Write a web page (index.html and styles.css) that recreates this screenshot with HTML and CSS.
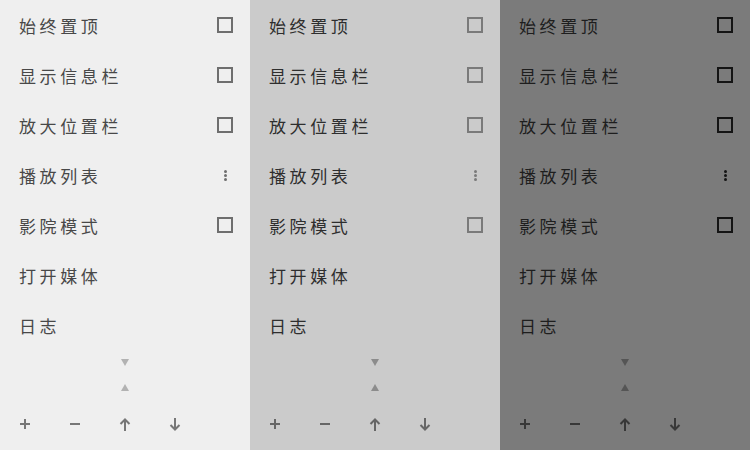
FILE: index.html
```html
<!DOCTYPE html>
<html lang="zh">
<head>
<meta charset="utf-8">
<title>Menu</title>
<link rel="stylesheet" href="styles.css">
</head>
<body>
<div class="screens">
  <section class="panel light">
    <ul class="menu">
      <li class="item"><span class="label">始终置顶</span><span class="check"></span></li>
      <li class="item"><span class="label">显示信息栏</span><span class="check"></span></li>
      <li class="item"><span class="label">放大位置栏</span><span class="check"></span></li>
      <li class="item"><span class="label">播放列表</span><span class="more"><i></i><i></i><i></i></span></li>
      <li class="item"><span class="label">影院模式</span><span class="check"></span></li>
      <li class="item"><span class="label">打开媒体</span></li>
      <li class="item"><span class="label">日志</span></li>
    </ul>
    <div class="scroller"><span class="tri down"></span><span class="tri up"></span></div>
    <div class="toolbar">
      <span class="btn"><svg width="12" height="12" viewBox="0 0 12 12"><path d="M6 1v10M1 6h10"/></svg></span>
      <span class="btn"><svg width="12" height="12" viewBox="0 0 12 12"><path d="M1 6h10"/></svg></span>
      <span class="btn"><svg width="12" height="13" viewBox="0 0 12 13"><path d="M6 1.5V13M1.5 6L6 1.5 10.5 6"/></svg></span>
      <span class="btn"><svg width="12" height="13" viewBox="0 0 12 13"><path d="M6 0V11.5M1.5 7L6 11.5 10.5 7"/></svg></span>
    </div>
  </section>
  <section class="panel mid">
    <ul class="menu">
      <li class="item"><span class="label">始终置顶</span><span class="check"></span></li>
      <li class="item"><span class="label">显示信息栏</span><span class="check"></span></li>
      <li class="item"><span class="label">放大位置栏</span><span class="check"></span></li>
      <li class="item"><span class="label">播放列表</span><span class="more"><i></i><i></i><i></i></span></li>
      <li class="item"><span class="label">影院模式</span><span class="check"></span></li>
      <li class="item"><span class="label">打开媒体</span></li>
      <li class="item"><span class="label">日志</span></li>
    </ul>
    <div class="scroller"><span class="tri down"></span><span class="tri up"></span></div>
    <div class="toolbar">
      <span class="btn"><svg width="12" height="12" viewBox="0 0 12 12"><path d="M6 1v10M1 6h10"/></svg></span>
      <span class="btn"><svg width="12" height="12" viewBox="0 0 12 12"><path d="M1 6h10"/></svg></span>
      <span class="btn"><svg width="12" height="13" viewBox="0 0 12 13"><path d="M6 1.5V13M1.5 6L6 1.5 10.5 6"/></svg></span>
      <span class="btn"><svg width="12" height="13" viewBox="0 0 12 13"><path d="M6 0V11.5M1.5 7L6 11.5 10.5 7"/></svg></span>
    </div>
  </section>
  <section class="panel dark">
    <ul class="menu">
      <li class="item"><span class="label">始终置顶</span><span class="check"></span></li>
      <li class="item"><span class="label">显示信息栏</span><span class="check"></span></li>
      <li class="item"><span class="label">放大位置栏</span><span class="check"></span></li>
      <li class="item"><span class="label">播放列表</span><span class="more"><i></i><i></i><i></i></span></li>
      <li class="item"><span class="label">影院模式</span><span class="check"></span></li>
      <li class="item"><span class="label">打开媒体</span></li>
      <li class="item"><span class="label">日志</span></li>
    </ul>
    <div class="scroller"><span class="tri down"></span><span class="tri up"></span></div>
    <div class="toolbar">
      <span class="btn"><svg width="12" height="12" viewBox="0 0 12 12"><path d="M6 1v10M1 6h10"/></svg></span>
      <span class="btn"><svg width="12" height="12" viewBox="0 0 12 12"><path d="M1 6h10"/></svg></span>
      <span class="btn"><svg width="12" height="13" viewBox="0 0 12 13"><path d="M6 1.5V13M1.5 6L6 1.5 10.5 6"/></svg></span>
      <span class="btn"><svg width="12" height="13" viewBox="0 0 12 13"><path d="M6 0V11.5M1.5 7L6 11.5 10.5 7"/></svg></span>
    </div>
  </section>
</div>
</body>
</html>
```
FILE: styles.css
```css
* { box-sizing: border-box; }
html, body { margin: 0; padding: 0; }
body {
  width: 750px;
  height: 450px;
  overflow: hidden;
  font-family: "Noto Sans CJK SC", "Noto Sans", sans-serif;
}
.screens { display: flex; height: 450px; }
.panel {
  width: 250px;
  height: 450px;
  display: flex;
  flex-direction: column;
  --bg: #efefef;
  --text: #484848;
  --check: #6e6e6e;
  --icon: #777777;
  --tri: #b2b2b2;
  background: var(--bg);
  color: var(--text);
}
.panel.mid {
  --bg: #cbcbcb;
  --text: #2e2e2e;
  --check: #7a7a7a;
  --icon: #666666;
  --tri: #8c8c8c;
}
.panel.dark {
  --bg: #7b7b7b;
  --text: #1e1e1e;
  --check: #141414;
  --icon: #383838;
  --tri: #555555;
}
.menu {
  list-style: none;
  margin: 0;
  padding: 1px 0 0 0;
}
.item {
  height: 50px;
  display: flex;
  align-items: center;
  justify-content: space-between;
  padding: 0 17px 0 19px;
}
.label {
  font-size: 17px;
  letter-spacing: 3.6px;
  line-height: 20px;
}
.check {
  width: 16px;
  height: 16px;
  border: 2px solid var(--check);
  margin-bottom: 2px;
}
.more {
  width: 16px;
  display: flex;
  flex-direction: column;
  align-items: center;
  gap: 1px;
  margin-bottom: 1px;
}
.more i {
  display: block;
  width: 3px;
  height: 3px;
  border-radius: 50%;
  background: var(--check);
}
.scroller {
  display: flex;
  flex-direction: column;
  align-items: center;
  padding-top: 8px;
  gap: 18px;
  height: 48px;
}
.tri {
  width: 0;
  height: 0;
  border-left: 4.5px solid transparent;
  border-right: 4.5px solid transparent;
}
.tri.down { border-top: 7px solid var(--tri); }
.tri.up { border-bottom: 7px solid var(--tri); }
.toolbar {
  display: flex;
  height: 50px;
  align-items: center;
}
.btn {
  width: 50px;
  height: 50px;
  display: flex;
  align-items: center;
  justify-content: center;
}
.btn svg {
  fill: none;
  stroke: var(--icon);
  stroke-width: 2;
}
```
